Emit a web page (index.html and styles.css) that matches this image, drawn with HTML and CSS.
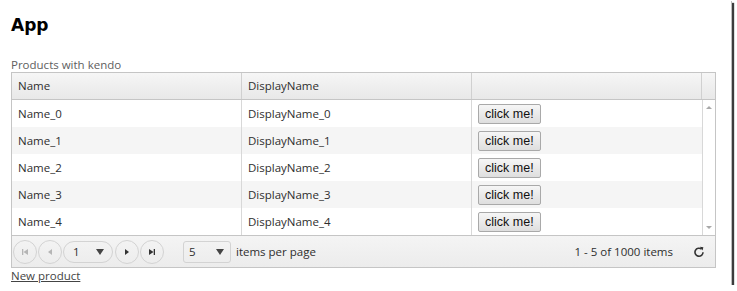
FILE: index.html
```html
<!DOCTYPE html>
<html lang="en">
<head>
    <meta charset="UTF-8">
    <title>App</title>
    <link rel="stylesheet" href="styles.css">
</head>
<body>
    <div class="shot">
        <h1>App</h1>
        <div class="caption">Products with kendo</div>
        <div class="grid">
            <div class="grid-header">
                <div class="th col-name">Name</div>
                <div class="th col-display">DisplayName</div>
                <div class="th col-action"></div>
                <div class="th col-scroll"></div>
            </div>
            <div class="grid-body">
                <div class="rows">
                    <div class="row">
                        <div class="td col-name">Name_0</div>
                        <div class="td col-display">DisplayName_0</div>
                        <div class="td col-action"><button class="click">click me!</button></div>
                    </div>
                    <div class="row alt">
                        <div class="td col-name">Name_1</div>
                        <div class="td col-display">DisplayName_1</div>
                        <div class="td col-action"><button class="click">click me!</button></div>
                    </div>
                    <div class="row">
                        <div class="td col-name">Name_2</div>
                        <div class="td col-display">DisplayName_2</div>
                        <div class="td col-action"><button class="click">click me!</button></div>
                    </div>
                    <div class="row alt">
                        <div class="td col-name">Name_3</div>
                        <div class="td col-display">DisplayName_3</div>
                        <div class="td col-action"><button class="click">click me!</button></div>
                    </div>
                    <div class="row">
                        <div class="td col-name">Name_4</div>
                        <div class="td col-display">DisplayName_4</div>
                        <div class="td col-action"><button class="click">click me!</button></div>
                    </div>
                </div>
                <div class="scrollbar">
                    <span class="arrow up"></span>
                    <span class="arrow down"></span>
                </div>
            </div>
            <div class="pager">
                <span class="pbtn off">
                    <svg width="8" height="8" viewBox="0 0 8 8"><rect x="1" y="1" width="1.3" height="6"/><path d="M7 1 L2.5 4 L7 7 Z"/></svg>
                </span>
                <span class="pbtn off">
                    <svg width="8" height="8" viewBox="0 0 8 8"><path d="M6 1 L2 4 L6 7 Z"/></svg>
                </span>
                <span class="pselect page">
                    <span>1</span>
                    <svg width="8" height="6" viewBox="0 0 8 6"><path d="M0 0 L8 0 L4 6 Z"/></svg>
                </span>
                <span class="pbtn">
                    <svg width="8" height="8" viewBox="0 0 8 8"><path d="M2 1 L6 4 L2 7 Z"/></svg>
                </span>
                <span class="pbtn">
                    <svg width="8" height="8" viewBox="0 0 8 8"><path d="M1 1 L5.5 4 L1 7 Z"/><rect x="5.7" y="1" width="1.3" height="6"/></svg>
                </span>
                <span class="pselect size">
                    <span>5</span>
                    <svg width="8" height="6" viewBox="0 0 8 6"><path d="M0 0 L8 0 L4 6 Z"/></svg>
                </span>
                <span class="per-page">items per page</span>
                <span class="info">1 - 5 of 1000 items</span>
                <span class="refresh">
                    <svg width="12" height="12" viewBox="0 0 12 12"><path d="M8.6 3.2 A4 4 0 1 0 10 6.2" fill="none" stroke="#333" stroke-width="1.6"/><path d="M6.8 0.8 L10.4 1.2 L9.6 4.6 Z" fill="#333"/></svg>
                </span>
            </div>
        </div>
        <a class="new-link" href="#">New product</a>
    </div>
</body>
</html>
```

FILE: styles.css
```css
body {
    margin: 0;
    background: #ffffff;
    font-family: "Open Sans", Arial, sans-serif;
    color: #2e2e2e;
}
.shot {
    width: 720px;
    height: 285px;
    padding-left: 11px;
    background: #ffffff;
    box-shadow: 1px 1px 0 #bdbdbd, 3px 3px 1px #3c3c3c;
    overflow: hidden;
}
h1 {
    margin: 0;
    padding-top: 14px;
    font-family: "DejaVu Sans", Verdana, sans-serif;
    font-size: 17px;
    font-weight: bold;
    color: #000;
    line-height: 22px;
    height: 44px;
}
.caption {
    font-size: 11.5px;
    line-height: 14px;
    color: #606060;
    height: 14px;
}
.grid {
    width: 703px;
    border: 1px solid #c5c5c5;
    font-size: 11.5px;
}
.grid-header {
    display: flex;
    height: 26px;
    background: linear-gradient(#f6f6f6, #e8e8e8);
    border-bottom: 1px solid #c5c5c5;
}
.th {
    line-height: 26px;
    padding-left: 6px;
    box-sizing: border-box;
    border-right: 1px solid #d0d0d0;
}
.col-name { width: 230px; }
.col-display { width: 230px; }
.col-action { width: 230px; }
.col-scroll { width: 13px; border-right: none; }
.grid-body {
    display: flex;
}
.rows {
    width: 690px;
}
.row {
    display: flex;
    height: 27px;
    background: #ffffff;
}
.row.alt {
    background: #f5f5f5;
}
.td {
    box-sizing: border-box;
    padding-left: 6px;
    line-height: 27px;
    border-right: 1px solid #d8d8d8;
}
.td.col-action {
    width: 230px;
    border-right: none;
    display: flex;
    align-items: center;
}
.click {
    font-family: "Liberation Sans", Arial, sans-serif;
    font-size: 12.5px;
    color: #111;
    height: 20px;
    padding: 0 6px;
    border: 1px solid #a9a9a9;
    border-radius: 2px;
    background: linear-gradient(#f6f6f6, #dedede);
}
.scrollbar {
    width: 13px;
    background: #ffffff;
    border-left: 1px solid #d8d8d8;
    display: flex;
    flex-direction: column;
    justify-content: space-between;
    align-items: center;
    padding: 6px 0;
}
.arrow {
    width: 0;
    height: 0;
    border-left: 3px solid transparent;
    border-right: 3px solid transparent;
}
.arrow.up { border-bottom: 3px solid #a8a8a8; }
.arrow.down { border-top: 3px solid #a8a8a8; }
.pager {
    display: flex;
    align-items: center;
    height: 31px;
    padding-left: 1px;
    border-top: 1px solid #c5c5c5;
    background: linear-gradient(#f4f4f4, #ececec);
    font-size: 11.5px;
}
.pbtn {
    width: 22px;
    height: 22px;
    border: 1px solid #d3d3d3;
    border-radius: 50%;
    display: flex;
    align-items: center;
    justify-content: center;
    margin-right: 1px;
    fill: #333;
}
.pbtn.off {
    fill: #b5b5b5;
}
.pselect {
    display: flex;
    align-items: center;
    justify-content: space-between;
    height: 22px;
    box-sizing: border-box;
    border: 1px solid #d3d3d3;
    fill: #444;
}
.pselect.page {
    width: 50px;
    border-radius: 11px;
    padding: 0 8px 0 9px;
    margin-right: 2px;
}
.pselect.size {
    width: 48px;
    border-radius: 3px;
    padding: 0 6px 0 5px;
    margin-left: 18px;
}
.per-page {
    margin-left: 5px;
}
.info {
    margin-left: auto;
    margin-right: 20px;
}
.refresh {
    width: 12px;
    height: 12px;
    margin-right: 10px;
    display: flex;
}
.new-link {
    display: block;
    font-size: 11.5px;
    color: #444;
}
```
